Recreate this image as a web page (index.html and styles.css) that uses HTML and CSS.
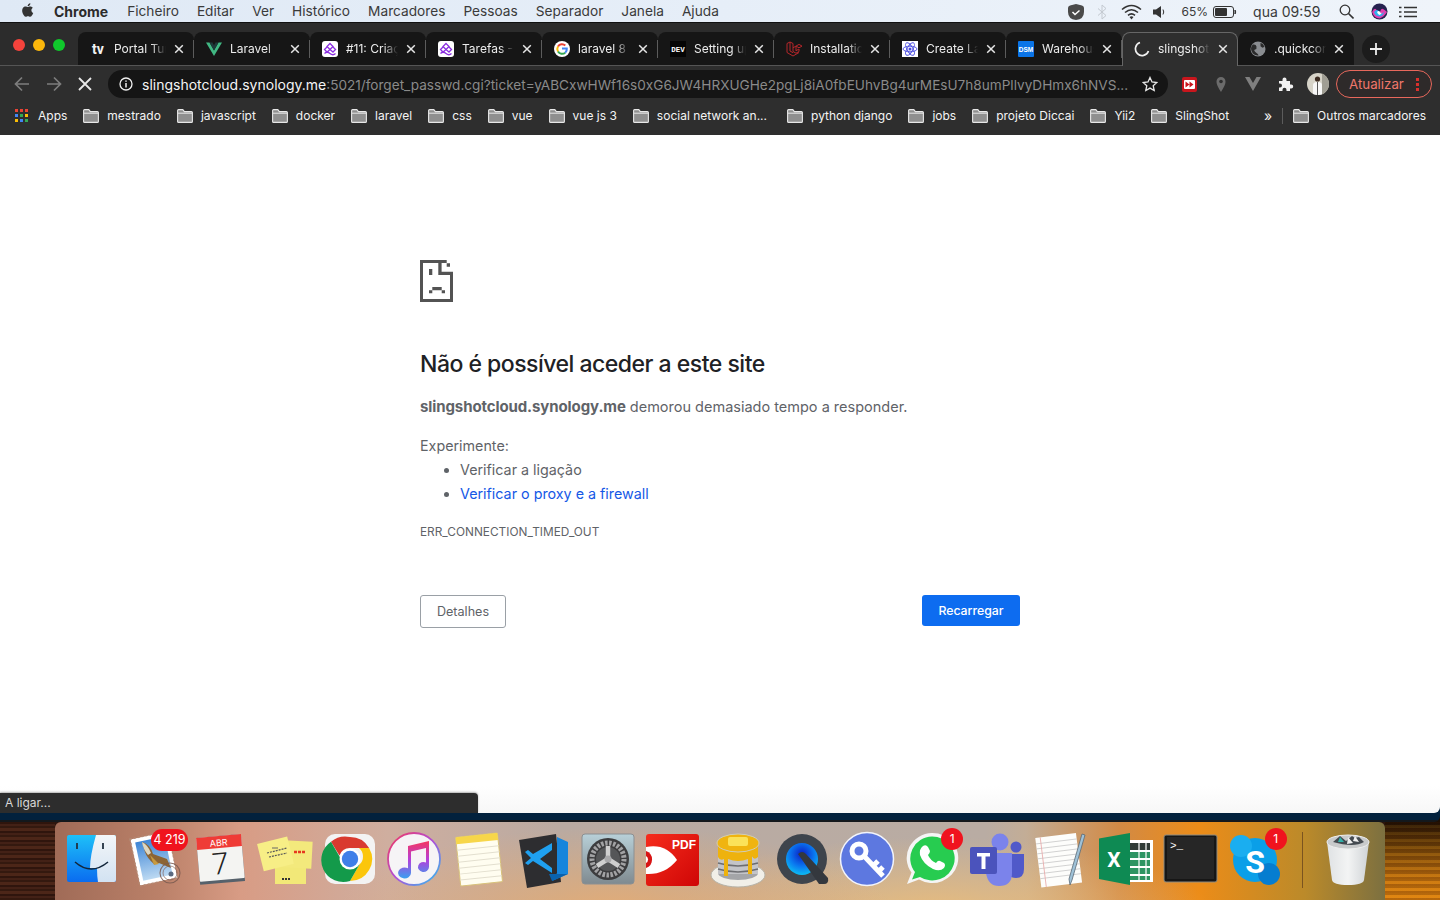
FILE: index.html
```html
<!DOCTYPE html>
<html lang="pt">
<head>
<meta charset="utf-8">
<title>slingshotcloud.synology.me</title>
<link rel="stylesheet" href="styles.css">
</head>
<body>
<svg class="defs" width="0" height="0">
  <defs>
    <symbol id="folder" viewBox="0 0 16 14">
      <path d="M.6 12.4V1.6q0-1 1-1h4.2l1.6 2h7q1 0 1 1v8.8q0 1-1 1H1.600q-1 0-1-1z" fill="#8f8f8f" stroke="#e8e8e8" stroke-width="1.100"/>
      <path d="M1 4.200h14" stroke="#e8e8e8" stroke-width="1"/>
    </symbol>
    <symbol id="close" viewBox="0 0 10 10">
      <path d="M1.200 1.200l7.600 7.600M8.800 1.200l-7.600 7.600" stroke="#e6e6e6" stroke-width="1.500" fill="none"/>
    </symbol>
    <symbol id="clickup" viewBox="0 0 16 16">
      <rect width="16" height="16" rx="3" fill="#fff"/>
      <path d="M8 2.500l3 3-3 3-3-3zM5 6l-2.500 2.500 2.500 2.500 3-2.500 3 2.500 2.500-2.500L11 6M2.500 12.500q2.500-2.500 5.500 0t5.500 0" fill="none" stroke="#8b2fe0" stroke-width="1.300"/>
    </symbol>
  </defs>
</svg>

<header class="menubar">
  <svg class="apple" viewBox="0 0 24 24" width="16" height="16"><path fill="#333" d="M17.050 12.540c-.03-2.570 2.100-3.800 2.200-3.860-1.200-1.750-3.060-1.990-3.720-2.020-1.580-.16-3.090.93-3.890.93-.8 0-2.040-.91-3.360-.88-1.730.02-3.320 1-4.210 2.550-1.800 3.120-.46 7.730 1.290 10.260.86 1.240 1.880 2.630 3.220 2.580 1.290-.05 1.780-.84 3.340-.84 1.560 0 2 .84 3.360.81 1.390-.02 2.270-1.260 3.120-2.510.98-1.440 1.390-2.830 1.410-2.900-.03-.01-2.710-1.040-2.740-4.120zM14.500 4.980c.71-.86 1.190-2.060 1.060-3.250-1.020.04-2.260.68-3 1.540-.66.76-1.230 1.980-1.080 3.150 1.140.09 2.300-.58 3.020-1.440z"/></svg>
  <nav class="menus">
    <span class="menu menu-app">Chrome</span>
    <span class="menu">Ficheiro</span>
    <span class="menu">Editar</span>
    <span class="menu">Ver</span>
    <span class="menu">Histórico</span>
    <span class="menu">Marcadores</span>
    <span class="menu">Pessoas</span>
    <span class="menu">Separador</span>
    <span class="menu">Janela</span>
    <span class="menu">Ajuda</span>
  </nav>
  <div class="status">
    <svg width="18" height="18" viewBox="0 0 18 18" class="st-shield"><path d="M9 1l6 1.500q2 .5 2 2.500v4q0 7-8 8-8-1-8-8V5q0-2 2-2.500z" fill="#4a4a4a"/><path d="M5.500 9l2.500 2.500 4.500-4" stroke="#fff" stroke-width="1.500" fill="none"/></svg>
    <svg width="10" height="16" viewBox="0 0 10 16" class="st-bt"><path d="M1 4.500l8 7-4 3.500V1l4 3.500-8 7" fill="none" stroke="#c3c9d0" stroke-width="1"/></svg>
    <svg width="21" height="16" viewBox="0 0 21 16" class="st-wifi"><path d="M1 5.500q9.500-8 19 0M4 8.500q6.500-5.500 13 0M7 11.300q3.500-3 7 0" fill="none" stroke="#333" stroke-width="1.600"/><path d="M10.500 15.500l-2-2.500q2-1.500 4 0z" fill="#333"/></svg>
    <svg width="14" height="14" viewBox="0 0 14 14" class="st-vol"><path d="M0 4.500h3L8 1v12L3 9.500H0z" fill="#333"/><path d="M10 4.500q1.500 2.500 0 5" fill="none" stroke="#333"/></svg>
    <span class="st-pct">65%</span>
    <svg width="24" height="12" viewBox="0 0 24 12" class="st-bat"><rect x=".5" y=".5" width="20" height="11" rx="2.500" fill="none" stroke="#333"/><rect x="2" y="2" width="12" height="8" rx="1" fill="#333"/><path d="M22 4q1.500 2 0 4z" fill="#333" stroke="#333"/></svg>
    <span class="st-clock">qua 09:59</span>
    <svg width="15" height="15" viewBox="0 0 15 15" class="st-search"><circle cx="6" cy="6" r="4.800" fill="none" stroke="#333" stroke-width="1.300"/><path d="M9.500 9.500l5 5" stroke="#333" stroke-width="1.600"/></svg>
    <svg width="17" height="17" viewBox="0 0 17 17" class="st-siri"><circle cx="8.500" cy="8.500" r="8" fill="#26224f"/><path d="M1 9q3-6 5-1t3 1 3-3 4 3q-3 5-7.500 6.500Q3 15 1 9z" fill="#e13fb0"/><path d="M3 9q3-4 5.500 0t5-1q-1 5-5 5.500Q4 13 3 9z" fill="#2fb4f0"/><path d="M6 9q2-2 3 0t2 0q-1 3-2.500 3T6 9z" fill="#fff"/></svg>
    <svg width="18" height="12" viewBox="0 0 18 12" class="st-list"><path d="M5 1.500h13M5 6h13M5 10.500h13" stroke="#333" stroke-width="1.400"/><path d="M0 1.500h2.500M0 6h2.500M0 10.500h2.500" stroke="#333" stroke-width="1.700"/></svg>
  </div>
</header>

<div class="window">
  <div class="tabstrip">
    <div class="lights"><i class="light red"></i><i class="light yellow"></i><i class="light green"></i></div>
    <div class="tab">
      <svg class="fav" viewBox="0 0 16 16"><text x="2" y="13" class="fav-tv">tv</text></svg>
      <span class="tab-title">Portal Turismo</span>
      <svg class="tab-x"><use href="#close"/></svg>
    </div>
    <div class="tab">
      <svg class="fav" viewBox="0 0 16 16"><path d="M0 1.500h3.500L8 9.500l4.500-8H16L8 15z" fill="#41b883"/><path d="M3.500 1.500h3L8 4.500l1.500-3h3L8 9.500z" fill="#1d3a3a"/></svg>
      <span class="tab-title">Laravel</span>
      <svg class="tab-x"><use href="#close"/></svg>
    </div>
    <div class="tab">
      <svg class="fav"><use href="#clickup"/></svg>
      <span class="tab-title">#11: Criação</span>
      <svg class="tab-x"><use href="#close"/></svg>
    </div>
    <div class="tab">
      <svg class="fav"><use href="#clickup"/></svg>
      <span class="tab-title">Tarefas - ClickUp</span>
      <svg class="tab-x"><use href="#close"/></svg>
    </div>
    <div class="tab">
      <svg class="fav" viewBox="0 0 16 16"><circle cx="8" cy="8" r="8" fill="#fff"/><path d="M4 5.500A4.800 4.800 0 0 1 11.300 4.500" stroke="#ea4335" stroke-width="2" fill="none"/><path d="M4 5.500a4.800 4.800 0 0 0 0 5" stroke="#fbbc05" stroke-width="2" fill="none"/><path d="M4 10.500a4.800 4.800 0 0 0 7.200 1.200" stroke="#34a853" stroke-width="2" fill="none"/><path d="M11.200 11.700A4.800 4.800 0 0 0 12.800 7.500H8" stroke="#4285f4" stroke-width="2" fill="none"/></svg>
      <span class="tab-title">laravel 8 vue</span>
      <svg class="tab-x"><use href="#close"/></svg>
    </div>
    <div class="tab">
      <svg class="fav" viewBox="0 0 16 16"><rect width="16" height="16" fill="#050505"/><text x="8" y="11" class="fav-dev">DEV</text></svg>
      <span class="tab-title">Setting up</span>
      <svg class="tab-x"><use href="#close"/></svg>
    </div>
    <div class="tab">
      <svg class="fav" viewBox="0 0 16 16"><path d="M1 2.500l3-1.500 3 1.500v8l3 1.700 3-1.700V8l-3 1.700M7 6.800l3-1.700 3 1.700 3-1.700-3-1.700-3 1.700v4.800M1 2.500v9l6 3.500 6-3.500M4 1v9l3 1.700" fill="none" stroke="#b5262a" stroke-width="1"/></svg>
      <span class="tab-title">Installation</span>
      <svg class="tab-x"><use href="#close"/></svg>
    </div>
    <div class="tab">
      <svg class="fav" viewBox="0 0 16 16"><rect width="16" height="16" fill="#fff"/><g fill="none" stroke="#4a4ce0" stroke-width=".9"><ellipse cx="8" cy="8" rx="7" ry="2.800"/><ellipse cx="8" cy="8" rx="7" ry="2.800" transform="rotate(60 8 8)"/><ellipse cx="8" cy="8" rx="7" ry="2.800" transform="rotate(120 8 8)"/></g><circle cx="8" cy="8" r="1.500" fill="#4a4ce0"/></svg>
      <span class="tab-title">Create Laravel</span>
      <svg class="tab-x"><use href="#close"/></svg>
    </div>
    <div class="tab">
      <svg class="fav" viewBox="0 0 16 16"><rect width="16" height="16" rx="1" fill="#0a74e8"/><text x="8" y="10.500" class="fav-dsm">DSM</text></svg>
      <span class="tab-title">Warehouse</span>
      <svg class="tab-x"><use href="#close"/></svg>
    </div>
    <div class="tab tab-active">
      <svg class="fav" viewBox="0 0 16 16"><path d="M6 1.500A6.700 6.700 0 1 0 14.500 10" fill="none" stroke="#f1f1f1" stroke-width="1.700"/></svg>
      <span class="tab-title">slingshotcloud</span>
      <svg class="tab-x"><use href="#close"/></svg>
    </div>
    <div class="tab">
      <svg class="fav" viewBox="0 0 16 16"><circle cx="8" cy="8" r="7.500" fill="#8a8d91"/><path d="M3 3.500q3-.5 3.500 2T5 8.500t1.500 3.500 1 2.500Q3 14 1.500 10T3 3.500zM10.500 1.800q3 1 4 4l-2 1-2-1.500z" fill="#2a2a2a"/></svg>
      <span class="tab-title">.quickconnect</span>
      <svg class="tab-x"><use href="#close"/></svg>
    </div>
    <div class="newtab"><svg width="12" height="12" viewBox="0 0 12 12"><path d="M6 0v12M0 6h12" stroke="#eee" stroke-width="1.800"/></svg></div>
  </div>

  <div class="toolbar">
    <div class="nav-btns">
      <svg width="16" height="16" viewBox="0 0 16 16"><path d="M15 8H2M8 1.500L1.500 8 8 14.500" fill="none" stroke="#7d7d7d" stroke-width="1.700"/></svg>
      <svg width="16" height="16" viewBox="0 0 16 16"><path d="M1 8h13M8 1.500L14.500 8 8 14.500" fill="none" stroke="#7d7d7d" stroke-width="1.700"/></svg>
      <svg width="14" height="14" viewBox="0 0 14 14"><path d="M1 1l12 12M13 1L1 13" stroke="#e8e8e8" stroke-width="1.800"/></svg>
    </div>
    <div class="omnibox">
      <svg class="info" width="14" height="14" viewBox="0 0 14 14"><circle cx="7" cy="7" r="6" fill="none" stroke="#f0f0f0" stroke-width="1.300"/><path d="M7 6v4.500M7 3.500v1.300" stroke="#f0f0f0" stroke-width="1.500"/></svg>
      <span class="url"><span class="url-host">slingshotcloud.synology.me</span>:5021/forget_passwd.cgi?ticket=yABCxwHWf16s0xG6JW4HRXUGHe2pgLj8iA0fbEUhvBg4urMEsU7h8umPllvyDHmx6hNVS...</span>
      <svg class="star" width="16" height="16" viewBox="0 0 16 16"><path d="M8 1.500l2 4.500 4.800.5-3.600 3.200 1 4.800L8 12.100 3.800 14.500l1-4.800L1.200 6.500 6 6z" fill="none" stroke="#e6e6e6" stroke-width="1.300"/></svg>
    </div>
    <div class="extensions">
      <svg width="15" height="15" viewBox="0 0 15 15" class="ext-red"><rect width="15" height="15" rx="2" fill="#c8161d"/><rect x="2" y="3" width="11" height="9" rx="1" fill="#fff"/><path d="M3.500 4.500l4 3-4 3zM7.500 4.500l4 3-4 3z" fill="#c8161d"/></svg>
      <svg width="12" height="17" viewBox="0 0 12 17" class="ext-pin"><path d="M6 16C3 11 1.500 8.500 1.500 5.500a4.500 4.500 0 0 1 9 0C10.500 8.500 9 11 6 16z" fill="#6b6b6b"/><circle cx="6" cy="5.500" r="1.800" fill="#2e2e2e"/></svg>
      <svg width="16" height="14" viewBox="0 0 16 14" class="ext-vue"><path d="M0 0h4.500L8 6l3.500-6H16L8 14z" fill="#7f7f7f"/></svg>
      <svg width="16" height="16" viewBox="0 0 16 16" class="ext-puzzle"><path d="M1 5h3.500V3.500a2 2 0 0 1 4 0V5H12v3.500h1.200a2 2 0 0 1 0 4H12V15H8.500v-1.300a2 2 0 0 0-4 0V15H1v-3.500h1a2 2 0 0 0 0-4H1z" fill="#f2f2f2"/></svg>
      <svg width="22" height="22" viewBox="0 0 22 22" class="ext-avatar"><defs><clipPath id="av"><circle cx="11" cy="11" r="11"/></clipPath></defs><g clip-path="url(#av)"><rect width="22" height="22" fill="#d6d3c8"/><rect x="15" width="7" height="22" fill="#a09e94"/><circle cx="10.500" cy="6" r="2.600" fill="#3b2a20"/><path d="M6 22V12q0-3 4.500-3t4.500 3v10z" fill="#f7f7f7"/><path d="M10 9h1v13h-1z" fill="#555"/></g></svg>
    </div>
    <div class="update">
      <span>Atualizar</span>
      <svg width="3" height="13" viewBox="0 0 3 13"><path d="M0 0h3v3H0zM0 5h3v3H0zM0 10h3v3H0z" fill="#d9302c"/></svg>
    </div>
  </div>

  <div class="bookmarks">
    <div class="bm bm-apps">
      <svg width="13" height="13" viewBox="0 0 13 13"><g><rect x="0" y="0" width="3" height="3" fill="#ea4335"/><rect x="5" y="0" width="3" height="3" fill="#ea4335"/><rect x="10" y="0" width="3" height="3" fill="#ea4335"/><rect x="0" y="5" width="3" height="3" fill="#4285f4"/><rect x="5" y="5" width="3" height="3" fill="#34a853"/><rect x="10" y="5" width="3" height="3" fill="#fbbc05"/><rect x="0" y="10" width="3" height="3" fill="#fbbc05"/><rect x="5" y="10" width="3" height="3" fill="#4285f4"/><rect x="10" y="10" width="3" height="3" fill="#34a853"/></g></svg>
      <span>Apps</span>
    </div>
    <div class="bm"><svg class="bm-folder"><use href="#folder"/></svg><span>mestrado</span></div>
    <div class="bm"><svg class="bm-folder"><use href="#folder"/></svg><span>javascript</span></div>
    <div class="bm"><svg class="bm-folder"><use href="#folder"/></svg><span>docker</span></div>
    <div class="bm"><svg class="bm-folder"><use href="#folder"/></svg><span>laravel</span></div>
    <div class="bm"><svg class="bm-folder"><use href="#folder"/></svg><span>css</span></div>
    <div class="bm"><svg class="bm-folder"><use href="#folder"/></svg><span>vue</span></div>
    <div class="bm"><svg class="bm-folder"><use href="#folder"/></svg><span>vue js 3</span></div>
    <div class="bm bm-long"><svg class="bm-folder"><use href="#folder"/></svg><span>social network an...</span></div>
    <div class="bm"><svg class="bm-folder"><use href="#folder"/></svg><span>python django</span></div>
    <div class="bm"><svg class="bm-folder"><use href="#folder"/></svg><span>jobs</span></div>
    <div class="bm"><svg class="bm-folder"><use href="#folder"/></svg><span>projeto Diccai</span></div>
    <div class="bm"><svg class="bm-folder"><use href="#folder"/></svg><span>Yii2</span></div>
    <div class="bm"><svg class="bm-folder"><use href="#folder"/></svg><span>SlingShot</span></div>
    <div class="bm-end">
      <span class="bm-more">»</span>
      <i class="bm-sep"></i>
      <div class="bm"><svg class="bm-folder"><use href="#folder"/></svg><span>Outros marcadores</span></div>
    </div>
  </div>

  <main class="page">
    <div class="error">
      <svg class="sad" width="33" height="42" viewBox="0 0 33 42"><path fill="#535353" d="M0 0h26.700v3H21.600v8.700H33V42H0zM3 3v36h27V15H18.300V3zM26.700 3.300H30v3.400H26.700zM9 9h3.300v6H9zM12.300 27h9.400v3.300h-9.400zM9 30.300h3.300v3H9zM21.700 30.300H25v3h-3.300z" fill-rule="evenodd"/></svg>
      <h1 class="title">Não é possível aceder a este site</h1>
      <p class="lead"><strong>slingshotcloud.synology.me</strong> demorou demasiado tempo a responder.</p>
      <p class="try">Experimente:</p>
      <ul class="suggest">
        <li>Verificar a ligação</li>
        <li><a class="link">Verificar o proxy e a firewall</a></li>
      </ul>
      <p class="code">ERR_CONNECTION_TIMED_OUT</p>
      <div class="actions">
        <button class="btn btn-details">Detalhes</button>
        <button class="btn btn-reload">Recarregar</button>
      </div>
    </div>
    <div class="statusbubble">A ligar...</div>
  </main>
</div>
<div class="window-shadow"></div>

<footer class="desktop">
  <div class="dock">
    <div class="dock-icon">
      <svg viewBox="0 0 60 60" width="60" height="60"><defs><linearGradient id="fb" x1="0" y1="0" x2="0" y2="1"><stop offset="0" stop-color="#1ec0f8"/><stop offset="1" stop-color="#0a6cf0"/></linearGradient><linearGradient id="fw" x1="0" y1="0" x2="0" y2="1"><stop offset="0" stop-color="#f3f6f8"/><stop offset="1" stop-color="#d2e2f2"/></linearGradient></defs><rect x="6" y="6" width="49" height="47" rx="2" fill="url(#fb)"/><path d="M35 6h18q2 0 2 2v43q0 2-2 2H37q-1-6-1-14h-7q0-12 6-33z" fill="url(#fw)"/><path d="M16 14v6M42 14v6" stroke="#23313f" stroke-width="1.800"/><path d="M14 33q16 14 33 0" fill="none" stroke="#12263a" stroke-width="1.500"/></svg>
    </div>
    <div class="dock-icon">
      <svg viewBox="0 0 60 60" width="60" height="60"><defs><linearGradient id="ms" x1="0" y1="0" x2="0" y2="1"><stop offset="0" stop-color="#3f86d6"/><stop offset="1" stop-color="#bcd9f2"/></linearGradient></defs><g transform="rotate(-12 28 30)"><rect x="9" y="6" width="38" height="47" fill="#fff"/><rect x="8.500" y="5.500" width="39" height="48" fill="none" stroke="#b48a74" stroke-width="1.500" stroke-dasharray="2 2"/><rect x="13" y="10" width="30" height="39" fill="url(#ms)"/></g><path d="M16 13q8 2 11 12l14 5 4 9-12-5-5 1q-7-6-9-12z" fill="#8c6434"/><path d="M16 13q6 3 9 11l-3 2q-5-6-6-13z" fill="#ddd6c0"/><path d="M24 26l9 9-5 1z" fill="#c89a3e"/><circle cx="44" cy="44" r="10" fill="none" stroke="#7a5a50" stroke-width="1.100" opacity=".85"/><circle cx="44" cy="44" r="7" fill="none" stroke="#7a5a50" stroke-width=".8" opacity=".8"/><circle cx="45" cy="45" r="2.500" fill="#5a6a80"/></svg>
      <span class="badge badge-wide">4 219</span>
    </div>
    <div class="dock-icon">
      <svg viewBox="0 0 60 60" width="60" height="60"><g transform="rotate(-5 30 30)"><rect x="8" y="7" width="45" height="47" fill="#56616b"/><rect x="8" y="7" width="45" height="44" rx="1" fill="#f4f4f2"/><path d="M8 7h45v12H8z" fill="#ef3b36"/><text x="30" y="17" class="cal-month">ABR</text><text x="30" y="45" class="cal-day">7</text></g></svg>
    </div>
    <div class="dock-icon">
      <svg viewBox="0 0 60 60" width="60" height="60"><rect x="20" y="32" width="31" height="23" fill="#f2e878"/><rect x="28" y="12" width="29" height="27" transform="rotate(3 42 25)" fill="#f3e97c"/><rect x="5" y="11" width="31" height="28" transform="rotate(-14 20 25)" fill="#f7ee86"/><path d="M12 24l20-5M14 28l18-4" stroke="#585858" stroke-width="1.200" stroke-dasharray="2 1"/><path d="M39 23h11" stroke="#e6381f" stroke-width="2.500" stroke-dasharray="3 1"/><path d="M27 50h9" stroke="#333" stroke-width="1.800" stroke-dasharray="2 1"/><path d="M17 19h6" stroke="#666" stroke-width="1"/></svg>
    </div>
    <div class="dock-icon">
      <svg viewBox="0 0 60 60" width="60" height="60"><rect x="5" y="5" width="50" height="50" rx="10" fill="#f3f3f3"/><path d="M30 8a22 22 0 0 1 19.100 11H30a11 11 0 0 0-10.500 7.500L11 12.800A22 22 0 0 1 30 8z" fill="#d93a2f"/><path d="M49.100 19A22 22 0 0 1 30 52l9.500-16.500A11 11 0 0 0 39 19z" fill="#fbc60c"/><path d="M11 12.800l9.500 16.500A11 11 0 0 0 39.500 35.500L30 52A22 22 0 0 1 11 12.800z" fill="#139a4a"/><circle cx="30" cy="30" r="10.500" fill="#fff"/><circle cx="30" cy="30" r="8.200" fill="#3f7fe8"/></svg>
    </div>
    <div class="dock-icon">
      <svg viewBox="0 0 60 60" width="60" height="60"><defs><linearGradient id="ring" x1="0" y1="0" x2="1" y2="1"><stop offset="0" stop-color="#f4385c"/><stop offset=".5" stop-color="#b04ed8"/><stop offset="1" stop-color="#28c4f0"/></linearGradient><linearGradient id="note" x1="0" y1="0" x2="0" y2="1"><stop offset="0" stop-color="#f5375e"/><stop offset=".5" stop-color="#b53edb"/><stop offset="1" stop-color="#39a0f0"/></linearGradient></defs><circle cx="30" cy="30" r="26" fill="#f6f4f6" stroke="url(#ring)" stroke-width="1.800"/><path d="M24 17l21-5v26a5.500 5 0 1 1-3-4.500V19l-15 3.500V44a6.500 5.500 0 1 1-3-4.700z" fill="url(#note)"/></svg>
    </div>
    <div class="dock-icon">
      <svg viewBox="0 0 60 60" width="60" height="60"><g transform="rotate(-6 30 30)"><rect x="9" y="6" width="42" height="49" rx="1" fill="#fffdf0" stroke="#d8c27a"/><path d="M9 7q0-1 1-1h40q1 0 1 1v6H9z" fill="#f7d64a"/><path d="M9 19h42M9 25h42M9 31h42M9 37h42M9 43h42M9 49h42" stroke="#e3dfcf" stroke-width="1"/></g></svg>
    </div>
    <div class="dock-icon">
      <svg viewBox="0 0 60 60" width="60" height="60"><path d="M5 10l37-6 5 48-34 6z" fill="#2d2d30" transform="translate(0 1)"/><path d="M43 8l11 5v32l-16 7 5-8z" fill="#1685dc"/><path d="M35 45l19 0-16 7z" fill="#0a62ae"/><path d="M38 21L26 30l12 9v5L19 32l-5 4-3-2 6-5-6-6 3-2 5 4L38 14z" fill="#1fa0f0"/></svg>
    </div>
    <div class="dock-icon">
      <svg viewBox="0 0 60 60" width="60" height="60"><defs><linearGradient id="sp" x1="0" y1="0" x2="0" y2="1"><stop offset="0" stop-color="#b8d0d8"/><stop offset="1" stop-color="#7f8a90"/></linearGradient></defs><rect x="4" y="5" width="52" height="50" rx="3" fill="url(#sp)" stroke="#8b8f92"/><circle cx="30" cy="30" r="21" fill="#3c3c3e"/><circle cx="30" cy="30" r="16" fill="none" stroke="#a2a2a4" stroke-width="5" stroke-dasharray="2.500 1.500"/><circle cx="30" cy="30" r="12" fill="#555658"/><path d="M30 30V17M30 30L19 37M30 30l11 7" stroke="#cfcfcf" stroke-width="4.500"/><circle cx="30" cy="30" r="3.500" fill="#a9a9ab"/></svg>
    </div>
    <div class="dock-icon">
      <svg viewBox="0 0 60 60" width="60" height="60"><defs><linearGradient id="pdf" x1="0" y1="0" x2="1" y2="1"><stop offset="0" stop-color="#f62c1c"/><stop offset="1" stop-color="#cf0606"/></linearGradient></defs><rect x="3" y="5" width="53" height="52" rx="3" fill="url(#pdf)"/><path d="M3 18q20-4 31 13Q22 46 3 45z" fill="#fff"/><path d="M3 22a9 9 0 0 1 0 17z" fill="#d81414"/><path d="M3 27a4 4 0 0 1 0 7z" fill="#fff"/><text x="41" y="20" class="pdf-label">PDF</text></svg>
    </div>
    <div class="dock-icon">
      <svg viewBox="0 0 60 60" width="60" height="60"><ellipse cx="30" cy="46" rx="27" ry="12" fill="#f1efe8" stroke="#b6b3a8"/><ellipse cx="30" cy="44" rx="20" ry="7" fill="#a4a5a8"/><rect x="10" y="28" width="40" height="17" fill="#c3c4c8"/><path d="M10 34q20 6 40 0M10 40q20 6 40 0" stroke="#6d6e72" stroke-width="1.500" fill="none"/><path d="M10 14h40v14q-4 4-6-1v18h-4V30q-10 4-20 0v17h-4V30q-4 2-6-2z" fill="#eeb20d"/><ellipse cx="30" cy="14" rx="21" ry="9" fill="#f0b410" stroke="#d0cdb8"/><rect x="20" y="8" width="20" height="9" rx="2" fill="#fbe25a"/></svg>
    </div>
    <div class="dock-icon">
      <svg viewBox="0 0 60 60" width="60" height="60"><defs><radialGradient id="qt" cx=".5" cy=".35" r=".7"><stop offset="0" stop-color="#0b1cc4"/><stop offset=".55" stop-color="#0a78f0"/><stop offset="1" stop-color="#0cc8f4"/></radialGradient></defs><circle cx="29" cy="30" r="25" fill="#3e444c"/><circle cx="29" cy="30" r="16" fill="url(#qt)"/><path d="M25 25q4-4 8 0l22 24q1 6-4 6h-5z" fill="#34383e"/></svg>
    </div>
    <div class="dock-icon">
      <svg viewBox="0 0 60 60" width="60" height="60"><circle cx="30" cy="30" r="26.500" fill="#5d78e0" stroke="#f2f4fc" stroke-width="1.500"/><circle cx="22" cy="22" r="7" fill="none" stroke="#fff" stroke-width="5"/><path d="M27 27l19 20M36 37l5-5M41 43l5-5" stroke="#fff" stroke-width="5" fill="none"/></svg>
    </div>
    <div class="dock-icon">
      <svg viewBox="0 0 60 60" width="60" height="60"><path d="M30 4a26 25 0 1 1-13 46.500L5 55l4.500-11.500A26 25 0 0 1 30 4z" fill="#f5f5f5"/><path d="M30 7.500a22.500 22 0 1 1-12 40.500l-8 2.500 3-7.500A22.500 22 0 0 1 30 7.500z" fill="#27cc50"/><path d="M21 17q3-2 5 1l2 4q0 2-2 4 2 5 8 8 2-3 4-2l4 2q2 2 0 5-4 4-11 1-10-5-13-14-1-6 3-9z" fill="#fff"/></svg>
      <span class="badge">1</span>
    </div>
    <div class="dock-icon">
      <svg viewBox="0 0 60 60" width="60" height="60"><circle cx="33" cy="13" r="8.500" fill="#7b83eb"/><circle cx="49" cy="18" r="5.500" fill="#5059c9"/><path d="M42 25h15v15q0 9-8 9-5 0-7-3z" fill="#5059c9"/><path d="M19 24h26v20q0 13-13 13-11 0-13-13z" fill="#7b83eb"/><rect x="3" y="18" width="27" height="27" rx="2" fill="#4b53bc"/><path d="M10 24h13v3.500h-4.500V40h-4V27.500H10z" fill="#fff"/></svg>
    </div>
    <div class="dock-icon">
      <svg viewBox="0 0 60 60" width="60" height="60"><g transform="rotate(-7 30 30)"><rect x="7" y="6" width="41" height="50" fill="#fdfdfb"/><path d="M7 12h41M7 17h41M7 22h41M7 27h41M7 32h41M7 37h41M7 42h41M7 47h41" stroke="#c9c9c9" stroke-width=".8"/><path d="M12 6v50" stroke="#e8a8a8" stroke-width=".8"/></g><path d="M54 6l-13 45-2 5-1-6L51 5z" fill="#9fc2d8" stroke="#5a6a76" stroke-width=".8"/></svg>
    </div>
    <div class="dock-icon">
      <svg viewBox="0 0 60 60" width="60" height="60"><rect x="30" y="11" width="27" height="42" fill="#fff"/><path d="M33 14h21v7H33z" fill="#2f3a36"/><path d="M33 23h21v6H33zM33 31h21v6H33zM33 39h21v6H33zM33 47h21v4H33z" fill="#2d9462"/><path d="M43 14v37M50 14v37" stroke="#fff" stroke-width="1.200"/><path d="M3 9.500L34 4v52L3 50z" fill="#0e8a53"/><text x="18" y="38" class="xl-label">X</text></svg>
    </div>
    <div class="dock-icon">
      <svg viewBox="0 0 60 60" width="60" height="60"><rect x="3" y="6" width="53" height="47" rx="2" fill="#161616" stroke="#8e8b80" stroke-width="1"/><rect x="6" y="8" width="47" height="42" fill="#262626"/><text x="9" y="20" class="term-prompt">&gt;_</text></svg>
    </div>
    <div class="dock-icon">
      <svg viewBox="0 0 60 60" width="60" height="60"><circle cx="30" cy="31" r="22" fill="#0a9fe8"/><circle cx="16" cy="17" r="11" fill="#1aaef0"/><circle cx="44" cy="45" r="11" fill="#067dd0"/><text x="30" y="44" class="sk-label">S</text></svg>
      <span class="badge">1</span>
    </div>
    <i class="dock-sep"></i>
    <div class="dock-icon">
      <svg viewBox="0 0 60 60" width="60" height="60"><defs><linearGradient id="tr" x1="0" y1="0" x2="1" y2="0"><stop offset="0" stop-color="#dfe2e4"/><stop offset=".5" stop-color="#f3f4f4"/><stop offset="1" stop-color="#cfd3d6"/></linearGradient></defs><path d="M9 13h42l-5 38q-1 5-16 5T14 51z" fill="url(#tr)"/><ellipse cx="30" cy="13" rx="21" ry="7" fill="#c8cacb" stroke="#eee"/><path d="M15 13l7-6 6 5 6-5 3 2 4-1 5 5q-10 6-31 0z" fill="#444a50"/><path d="M30 8l5 6-6 1zM37 7l4 6-6-1z" fill="#f0f0f0"/><path d="M22 8l4 5-6 0z" fill="#32b0a8"/></svg>
    </div>
  </div>
</footer>
</body>
</html>
```

FILE: styles.css
```css
* { box-sizing: border-box; }

html, body { margin: 0; height: 100%; }

body {
  width: 1440px;
  height: 900px;
  overflow: hidden;
  display: flex;
  flex-direction: column;
  font-family: Inter, Roboto, "Liberation Sans", sans-serif;
  background: #1d0f04;
}

.defs { position: absolute; }

/* macOS menu bar */
.menubar {
  height: 22px;
  flex: none;
  display: flex;
  align-items: center;
  padding: 1px 0 0 20px;
  background: linear-gradient(90deg, #dfe9f5, #e6eef8 50%, #eff4fa);
  font-size: 13.700px;
  color: #3a3a3a;
}
.apple { margin-top: -3px; }
.menus { display: flex; gap: 18px; margin-left: 18px; }
.menu-app { font-size: 14px; font-weight: 700; color: #2b2b2b; margin-right: 1px; }
.status { margin-left: auto; display: flex; align-items: center; }
.st-shield { margin-right: 12px; }
.st-bt { margin-right: 14.500px; }
.st-wifi { margin-right: 10.500px; }
.st-vol { margin-right: 15px; }
.st-pct { font-size: 12px; margin-right: 5px; }
.st-bat { margin-right: 16px; }
.st-clock { font-size: 14px; margin-right: 18px; }
.st-search { margin-right: 17px; }
.st-siri { margin-right: 11.500px; }
.st-list { margin-right: 23px; }

/* Browser window */
.window {
  flex: none;
  height: 791px;
  display: flex;
  flex-direction: column;
  border-top: 1px solid #111;
  background: #02213d;
  overflow: hidden;
}

.tabstrip {
  height: 43px;
  flex: none;
  display: flex;
  align-items: flex-end;
  background: #2c2c2c;
  border-bottom: 1px solid #555;
}
.lights {
  width: 78px;
  height: 100%;
  display: flex;
  gap: 8px;
  padding: 16px 0 0 13px;
  flex: none;
}
.light { width: 12px; height: 12px; border-radius: 50%; }
.red { background: #f4433c; }
.yellow { background: #fbb70c; }
.green { background: #10c92c; }

.tab {
  position: relative;
  width: 116px;
  height: 33px;
  flex: none;
  display: flex;
  align-items: center;
  padding-left: 12px;
  background: #161616;
  border-radius: 8px 8px 0 0;
  color: #ececec;
  font-size: 12px;
}
.tab::after {
  content: "";
  position: absolute;
  right: 0;
  top: 8px;
  height: 18px;
  width: 1px;
  background: #5c5c5c;
}
.tab-active {
  background: #2e2e2e;
  border: 1px solid #666;
  border-bottom: 0;
  padding: 0 0 2px 11px;
  margin-bottom: -1px;
  height: 34px;
  z-index: 1;
}
.tab-active::after, .tab:nth-child(11)::after, .tab:nth-child(12)::after { display: none; }

.fav { width: 16px; height: 16px; flex: none; }
.fav-tv { font: 700 14px Roboto, sans-serif; fill: #f2f2f2; }
.fav-dev { font: 700 7.500px "Liberation Mono", monospace; fill: #fff; text-anchor: middle; }
.fav-dsm { font: 700 6.500px "Liberation Sans", sans-serif; fill: #fff; text-anchor: middle; }

.tab-title {
  width: 52px;
  margin-left: 8px;
  white-space: nowrap;
  overflow: hidden;
  -webkit-mask-image: linear-gradient(90deg, #000 72%, transparent);
  mask-image: linear-gradient(90deg, #000 72%, transparent);
}
.tab-x { width: 10px; height: 10px; margin-left: 8px; flex: none; }

.newtab {
  width: 28px;
  height: 28px;
  margin: 0 0 2px 8px;
  border-radius: 50%;
  background: #1c1c1c;
  display: flex;
  align-items: center;
  justify-content: center;
}

/* Toolbar */
.toolbar {
  height: 34px;
  flex: none;
  display: flex;
  align-items: center;
  padding-top: 2px;
  background: #2e2e2e;
}
.nav-btns {
  width: 108px;
  flex: none;
  display: flex;
  align-items: center;
  gap: 16px;
  padding-left: 14px;
}
.omnibox {
  width: 1060px;
  height: 28px;
  flex: none;
  display: flex;
  align-items: center;
  padding: 0 10px 0 11px;
  border-radius: 14px;
  background: #151515;
  color: #8a8a8a;
}
.info { flex: none; }
.url { margin-left: 9px; white-space: nowrap; font-size: 13.600px; }
.url-host { font-size: 14px; color: #f4f4f4; }
.star { margin-left: auto; flex: none; }

.extensions { display: flex; align-items: center; flex: none; padding-left: 14px; }
.ext-red { margin-right: 18px; }
.ext-pin { margin-right: 18px; }
.ext-vue { margin-right: 17px; }
.ext-puzzle { margin-right: 13px; }
.ext-avatar { margin-right: 7px; }

.update {
  width: 96px;
  height: 28px;
  flex: none;
  display: flex;
  align-items: center;
  justify-content: space-between;
  padding: 0 12px;
  border: 1px solid #e8685c;
  border-radius: 14px;
  background: #2e2a2a;
  color: #f0776b;
  font-size: 13.300px;
}

/* Bookmarks */
.bookmarks {
  height: 35px;
  flex: none;
  display: flex;
  align-items: center;
  gap: 16px;
  padding: 0 0 4px 15px;
  background: #2e2e2e;
  font-size: 12px;
  color: #f4f4f4;
}
.bm { display: flex; align-items: center; gap: 8px; white-space: nowrap; }
.bm-apps { gap: 10px; }
.bm-folder { width: 16px; height: 14px; flex: none; }
.bm-long { margin-right: 4px; }
.bm-end { margin-left: auto; display: flex; align-items: center; padding-right: 14px; }
.bm-more { font-size: 14px; margin-right: 10px; }
.bm-sep { width: 1px; height: 16px; background: #5c5c5c; margin-right: 10px; }

/* Error page */
.page {
  position: relative;
  flex: 1;
  background: linear-gradient(180deg, #fff 96%, #f7f7f7);
  border-radius: 0 0 6px 0;
}
.error {
  width: 600px;
  margin-left: 420px;
  padding-top: 125px;
  font-size: 14.300px;
  line-height: 24px;
  color: #5f6368;
}
.sad { display: block; }
.title {
  margin: 44px 0 0;
  font-size: 23px;
  line-height: 36px;
  font-weight: 500;
  letter-spacing: -.5px;
  color: #202124;
}
.lead { margin: 13px 0 0; font-size: 14.500px; }
.lead strong { font-size: 15px; font-weight: 700; letter-spacing: -.1px; }
.try { margin: 15px 0 0; }
.suggest { margin: 0; padding-left: 40px; }
.link { color: #1558e6; }
.code { margin: 14px 0 0; font-size: 11.850px; line-height: 24px; }
.actions {
  display: flex;
  justify-content: space-between;
  align-items: flex-start;
  margin-top: 51px;
}
.btn {
  font-family: Inter, Roboto, sans-serif;
  border-radius: 3px;
  padding: 0 0 1px;
}
.btn-details {
  width: 86px;
  height: 33px;
  background: #fff;
  color: #5f6368;
  border: 1px solid #9aa0a6;
  font-size: 12.600px;
}
.btn-reload {
  width: 98px;
  height: 31px;
  background: #0d6cf0;
  color: #fff;
  border: 0;
  font-size: 12.300px;
  font-weight: 500;
}
.statusbubble {
  position: absolute;
  left: 0;
  bottom: 0;
  width: 478px;
  height: 20px;
  padding-left: 5px;
  border-radius: 0 4px 0 0;
  background: #2d2d2d;
  box-shadow: 0 -1px 2px rgba(0,0,0,.3);
  color: #d8d8d8;
  font-size: 12px;
  line-height: 20px;
}

.window-shadow {
  flex: none;
  height: 9px;
  background: linear-gradient(180deg, #02213d 0 75%, #14181c 75%);
  border-radius: 0 0 6px 0;
}

/* Desktop and dock */
.desktop {
  flex: 1;
  padding-left: 55px;
  background:
    repeating-linear-gradient(0deg, rgba(60,20,0,.25) 0 2px, rgba(255,170,40,.1) 2px 5px, rgba(40,10,0,.2) 5px 7px) right top / 55px 100% no-repeat,
    linear-gradient(180deg, #1d0f04, #7a4a0a 35%, #c9760f 75%, #e0840f) right top / 55px 100% no-repeat,
    repeating-linear-gradient(0deg, #34190f 0 2px, #432116 2px 4px, #2f150d 4px 6px, #4c2618 6px 9px) left top / 55px 100% no-repeat,
    #2b150e;
}
.dock {
  width: 1330px;
  height: 78px;
  display: flex;
  align-items: flex-start;
  padding: 7px 0 0 3.600px;
  border-radius: 6px 6px 0 0;
  background:
    radial-gradient(ellipse 280px 90px at 560px 95px, rgba(232,172,112,.95), rgba(232,172,112,0) 100%),
    radial-gradient(ellipse 280px 80px at 880px 95px, rgba(238,190,120,.95), rgba(238,190,120,0) 100%),
    linear-gradient(90deg, #a06b57 0, #bb8169 8%, #d89c85 14%, #cfae9f 25%, #b9aaa2 38%, #b9aca3 70%, #c3ad96 73%, #d28a45 80%, #ec8c18 86%, #bb8a2a 94%, #7c7040 100%);
}
.dock-icon {
  position: relative;
  width: 64.700px;
  height: 60px;
  flex: none;
  display: flex;
  justify-content: center;
}
.dock-sep {
  width: 1px;
  height: 56px;
  flex: none;
  margin: 3px 13px 0 14px;
  background: #7a5420;
}
.badge {
  position: absolute;
  top: -1px;
  right: 1px;
  min-width: 22px;
  height: 22px;
  padding: 0 6px;
  border-radius: 11px;
  background: #f0131e;
  color: #fff;
  font-size: 12px;
  line-height: 22px;
  text-align: center;
}
.badge-wide {
  top: 0;
  right: 0;
  width: 37px;
  padding: 0;
  white-space: nowrap;
  font-size: 12.500px;
}

.cal-month { font: 400 9px Inter, sans-serif; fill: #fff; text-anchor: middle; }
.cal-day { font: 300 30px Roboto, sans-serif; fill: #222; text-anchor: middle; }
.pdf-label { font: 700 12px "Liberation Sans Narrow", "Liberation Sans", sans-serif; fill: #fff; text-anchor: middle; }
.xl-label { font: 700 21px Roboto, sans-serif; fill: #fff; text-anchor: middle; }
.term-prompt { font: 400 11px "Liberation Mono", monospace; fill: #fff; }
.sk-label { font: 700 32px Roboto, sans-serif; fill: #fff; text-anchor: middle; }
```
